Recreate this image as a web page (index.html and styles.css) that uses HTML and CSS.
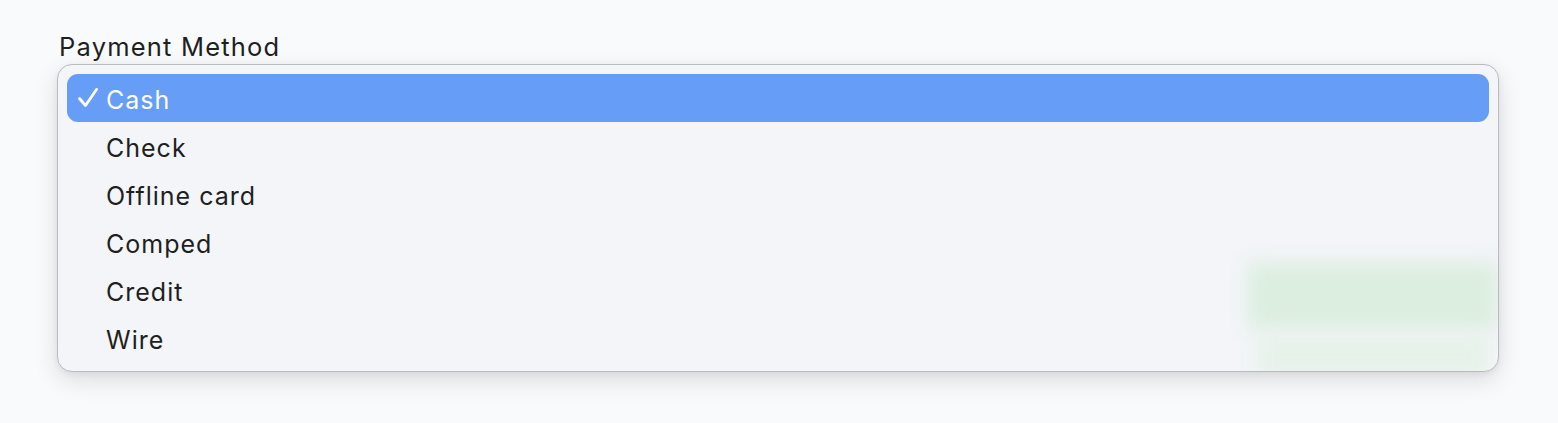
FILE: index.html
```html
<!DOCTYPE html>
<html>
<head>
<meta charset="utf-8">
<link rel="stylesheet" href="styles.css">
</head>
<body>
<div class="page">
  <div class="field">
    <div class="label">Payment Method</div>
    <div class="menu">
      <div class="behind">
        <div class="blob blob-a"></div>
        <div class="blob blob-b"></div>
      </div>
      <ul class="list">
        <li class="item selected"><span class="check"><svg width="20" height="20" viewBox="0 0 20 20"><path d="M1.5 10.5 L7.5 17.5 L18.5 1.5" fill="none" stroke="#ffffff" stroke-width="2.8" stroke-linecap="round" stroke-linejoin="round"/></svg></span>Cash</li>
        <li class="item"><span class="check"></span>Check</li>
        <li class="item"><span class="check"></span>Offline card</li>
        <li class="item"><span class="check"></span>Comped</li>
        <li class="item"><span class="check"></span>Credit</li>
        <li class="item"><span class="check"></span>Wire</li>
      </ul>
    </div>
  </div>
</div>
</body>
</html>
```
FILE: styles.css
```css
html, body {
  margin: 0;
  padding: 0;
  background: #f9fafb;
  font-family: Inter, "Noto Sans", "Liberation Sans", sans-serif;
  color: #1f2023;
}
body {
  min-height: 100vh;
}
.page {
  padding: 32px 59px 0 57px;
}
.field {
  display: flex;
  flex-direction: column;
}
.label {
  font-size: 25.5px;
  line-height: 30px;
  letter-spacing: 1.2px;
  padding-left: 2px;
  height: 32px;
  color: #1e1f22;
}
.menu {
  position: relative;
  width: 1442px;
  height: 308px;
  box-sizing: border-box;
  border-radius: 15px;
  background: #f3f5f8;
  border: 1px solid #b9bbbe;
  box-shadow: 0 8px 24px rgba(0,0,0,0.12), 0 2px 6px rgba(0,0,0,0.06);
  overflow: hidden;
}
.behind {
  position: absolute;
  inset: 0;
  overflow: hidden;
  border-radius: 14px;
}
.blob {
  position: absolute;
  filter: blur(10px);
}
.blob-a {
  left: 1190px;
  top: 198px;
  width: 250px;
  height: 66px;
  background: #dbeedf;
}
.blob-b {
  left: 1200px;
  top: 272px;
  width: 230px;
  height: 40px;
  background: #e5f2e8;
}
.list {
  position: relative;
  list-style: none;
  margin: 0;
  padding: 9px 9px;
}
.item {
  display: flex;
  align-items: center;
  height: 48px;
  font-size: 25px;
  letter-spacing: 1px;
  padding-top: 3px;
  box-sizing: border-box;
  color: #1e1f22;
  border-radius: 11px;
}
.item.selected {
  background: #669df7;
  color: #ffffff;
}
.check {
  width: 39px;
  padding-left: 11px;
  box-sizing: border-box;
  display: flex;
  align-items: center;
  margin-top: -3px;
}
```
